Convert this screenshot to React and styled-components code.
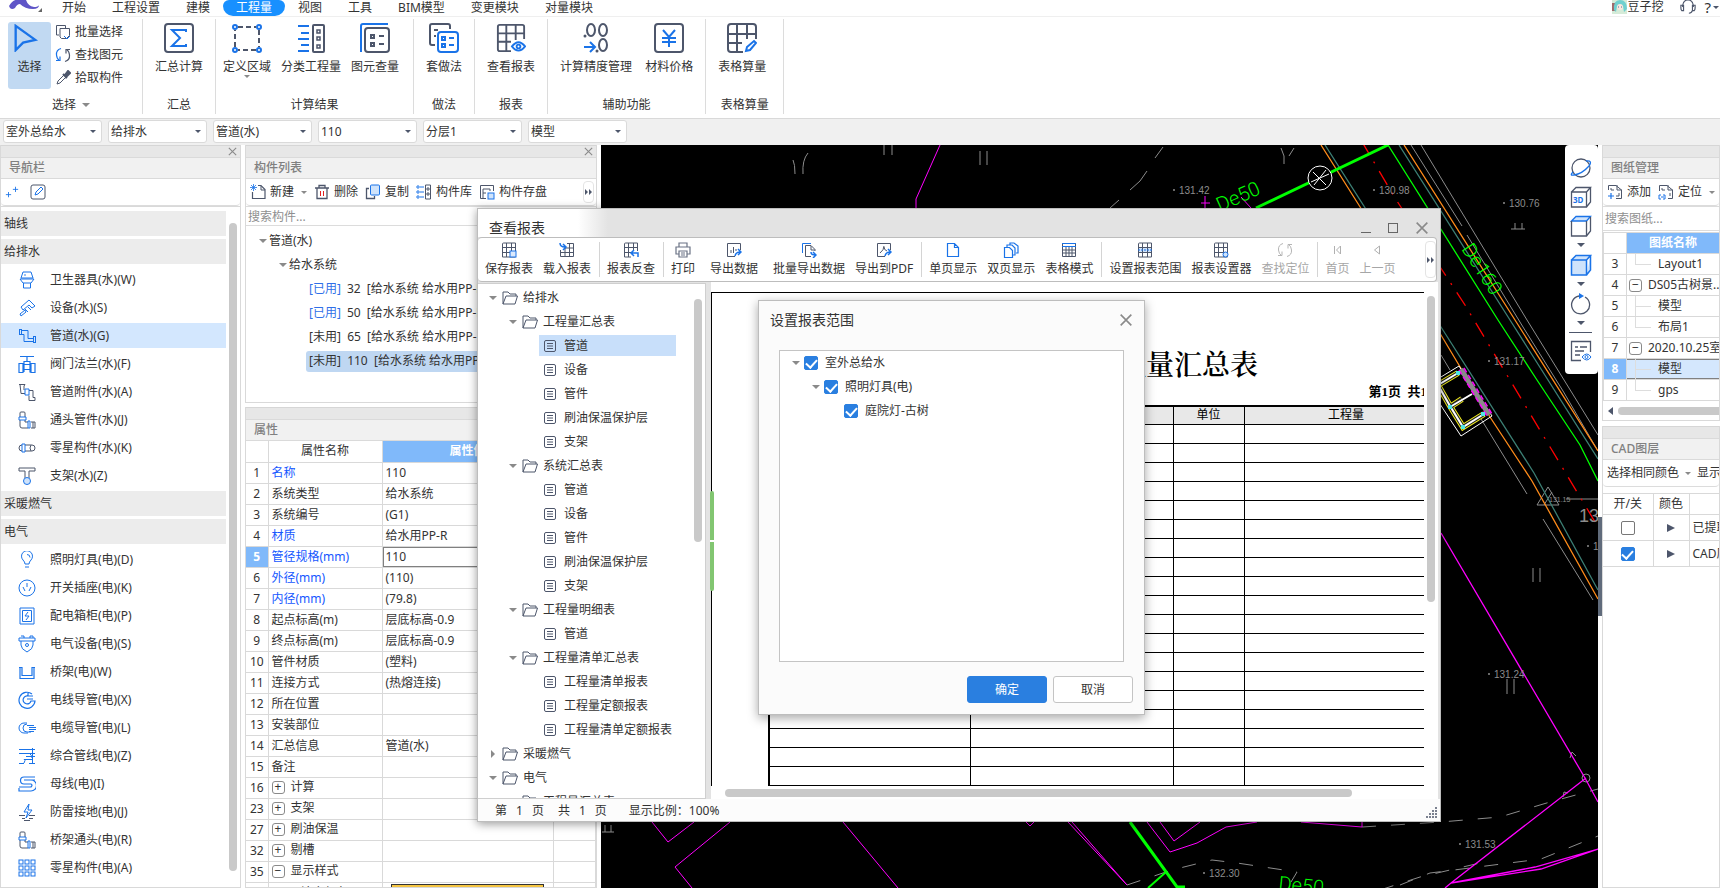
import React, { useState } from 'react'
import styled, { createGlobalStyle, css } from 'styled-components'

const INK = '#4d566b'
const BLUE = '#1a73e8'

const navGroups = [
  { title: '轴线', items: [] },
  {
    title: '给排水',
    items: [
      ['toilet', '卫生器具(水)(W)'],
      ['shower', '设备(水)(S)'],
      ['pipe', '管道(水)(G)'],
      ['valve', '阀门法兰(水)(F)'],
      ['pipePart', '管道附件(水)(A)'],
      ['elbow', '通头管件(水)(J)'],
      ['sleeve', '零星构件(水)(K)'],
      ['bracket', '支架(水)(Z)'],
    ],
  },
  { title: '采暖燃气', items: [] },
  {
    title: '电气',
    items: [
      ['bulb', '照明灯具(电)(D)'],
      ['socket', '开关插座(电)(K)'],
      ['cabinet', '配电箱柜(电)(P)'],
      ['plug', '电气设备(电)(S)'],
      ['tray', '桥架(电)(W)'],
      ['conduit', '电线导管(电)(X)'],
      ['cable', '电缆导管(电)(L)'],
      ['lines', '综合管线(电)(Z)'],
      ['busbar', '母线(电)(I)'],
      ['lightning', '防雷接地(电)(J)'],
      ['elbow', '桥架通头(电)(R)'],
      ['grid9', '零星构件(电)(A)'],
      ['box', ''],
    ],
  },
]

const properties = [
  ['1', '名称', '110', 'blue'],
  ['2', '系统类型', '给水系统'],
  ['3', '系统编号', '(G1)'],
  ['4', '材质', '给水用PP-R', 'blue'],
  ['5', '管径规格(mm)', '110', 'blue'],
  ['6', '外径(mm)', '(110)', 'blue'],
  ['7', '内径(mm)', '(79.8)', 'blue'],
  ['8', '起点标高(m)', '层底标高-0.9'],
  ['9', '终点标高(m)', '层底标高-0.9'],
  ['10', '管件材质', '(塑料)'],
  ['11', '连接方式', '(热熔连接)'],
  ['12', '所在位置', ''],
  ['13', '安装部位', ''],
  ['14', '汇总信息', '管道(水)'],
  ['15', '备注', ''],
  ['16', '计算', '', 'plus'],
  ['23', '支架', '', 'plus'],
  ['27', '刷油保温', '', 'plus'],
  ['32', '剔槽', '', 'plus'],
  ['35', '显示样式', '', 'minus'],
]

const reportTree = [
  [0, '给排水', 'open'],
  [1, '工程量汇总表', 'open'],
  [2, '管道'],
  [2, '设备'],
  [2, '管件'],
  [2, '刷油保温保护层'],
  [2, '支架'],
  [1, '系统汇总表', 'open'],
  [2, '管道'],
  [2, '设备'],
  [2, '管件'],
  [2, '刷油保温保护层'],
  [2, '支架'],
  [1, '工程量明细表', 'open'],
  [2, '管道'],
  [1, '工程量清单汇总表', 'open'],
  [2, '工程量清单报表'],
  [2, '工程量定额报表'],
  [2, '工程量清单定额报表'],
  [0, '采暖燃气', 'closed'],
  [0, '电气', 'open'],
  [1, '工程量汇总表', 'open'],
]

const reportTools = [
  [['tableSave', '保存报表'], ['tableLoad', '载入报表']],
  [['tableBack', '报表反查']],
  [['printer', '打印'], ['export', '导出数据', 'wide'], ['batchExport', '批量导出数据'], ['pdf', '导出到PDF']],
  [['page', '单页显示'], ['pages', '双页显示'], ['tableMode', '表格模式']],
  [['tableRange', '设置报表范围'], ['tableSet', '报表设置器'], ['locate', '查找定位', 'off']],
  [['first', '首页', 'off'], ['prev', '上一页', 'off']],
]

// [viewBox size, drawing]
const table15 = (
  <path d="M1.500 2a1 1 0 0 1 1-1H14.500v14H1.500zM1.500 5.500H14.500M1.500 10.500H14.500M5.500 1v14M10.500 1v14" />
)
const icons = {
  cursor: [30, <path d="M5 2v26l8-8 13-3z" stroke={BLUE} strokeWidth="2.500" />],
  batchSelect: [16, <>
    <path d="M4 11H1.500V1.500h9V4" stroke={INK} />
    <path d="M5 4.500h9.500v7l-3 3H6.500L5 13z" stroke={INK} />
    <path d="M9 12l3 3 3-3" stroke={BLUE} />
  </>],
  findLoop: [16, <>
    <path d="M6 1.500Q1 3 1.500 8 2 12 4 13" stroke={BLUE} strokeWidth="1.200" /><path d="M1 13.500h4v-4" stroke={BLUE} strokeWidth="1.200" />
    <path d="M10 14.500Q15 13 14.500 8 14 4 12 3M15 2.500h-4v4" stroke={INK} strokeWidth="1.200" />
  </>],
  picker: [16, <>
    <path d="M2 14l1-3 6-6 2 2-6 6z" stroke={INK} />
    <path d="M8 4l4 4M10 5l3-4 2 2-4 4z" stroke={INK} strokeWidth="2" fill={INK} />
  </>],
  sigma: [30, <>
    <rect x="1" y="1" width="28" height="28" rx="3" stroke={INK} strokeWidth="2" />
    <path d="M22 9V7H8l8 8-8 8h14v-2" stroke={BLUE} strokeWidth="2" />
  </>],
  region: [30, <>
    <path d="M6 4h18M27 7v17M24 27H6M3 24V7" stroke={INK} strokeWidth="2" strokeDasharray="5 3" />
    {[[3, 4], [27, 4], [3, 27], [27, 27]].map(([x, y]) => (
      <circle key={`${x}-${y}`} cx={x} cy={y} r="2" stroke={BLUE} strokeWidth="2" fill="#fff" />
    ))}
  </>],
  classify: [30, <>
    <path d="M2 3h11M5 10h8M2 16h11M5 22h8M2 28h11" stroke={BLUE} strokeWidth="2" />
    <rect x="17" y="2" width="11" height="27" rx="1" stroke={INK} strokeWidth="2" />
    <path d="M21 7h3v3h-3zM21 14h3v3h-3zM21 22h3v3h-3z" stroke={INK} strokeWidth="1.500" />
  </>],
  elementQty: [30, <>
    <path d="M1 29V3a2 2 0 0 1 2-2h25" stroke={BLUE} strokeWidth="2" />
    <rect x="5" y="5" width="24" height="24" rx="3" stroke={INK} strokeWidth="2" />
    <path d="M11 12h3v3h-3zM11 20h3v3h-3zM19 13h5M19 21h5" stroke={INK} strokeWidth="2" />
  </>],
  method: [30, <>
    <path d="M6 22H3a2 2 0 0 1-2-2V3a2 2 0 0 1 2-2h16a2 2 0 0 1 2 2v3M5 7h4M5 13h2" stroke={INK} strokeWidth="2" />
    <rect x="9" y="9" width="20" height="20" rx="3" stroke={BLUE} strokeWidth="2" />
    <path d="M13 14h3v3h-3zM13 21h3v3h-3zM20 15h5M20 22h5" stroke={BLUE} strokeWidth="2" />
  </>],
  viewReport: [32, <>
    <path d="M16 30H4a2 2 0 0 1-2-2V4a2 2 0 0 1 2-2h24a2 2 0 0 1 2 2v13M2 11h28M2 20h14M11 2v28M21 2v16" stroke={INK} strokeWidth="2" />
    <path d="M17 25q7-9 14 0q-7 9-14 0z" stroke={BLUE} strokeWidth="2" fill="#fff" />
    <circle cx="24" cy="25" r="2" stroke={BLUE} strokeWidth="2" />
  </>],
  precision: [30, <>
    <ellipse cx="10" cy="7" rx="4" ry="6" stroke={INK} strokeWidth="2" />
    <ellipse cx="22" cy="7" rx="4" ry="6" stroke={INK} strokeWidth="2" />
    <ellipse cx="22" cy="22" rx="4" ry="6" stroke={INK} strokeWidth="2" />
    <circle cx="4" cy="13" r="1.500" fill={INK} /><circle cx="16" cy="28" r="1.500" fill={INK} />
    <path d="M3 24h10M9 19l5 5-5 5" stroke={BLUE} strokeWidth="2" />
  </>],
  price: [30, <>
    <rect x="1" y="1" width="28" height="28" rx="3" stroke={INK} strokeWidth="2" />
    <path d="M9 7l6 7 6-7M8 15h14M8 19h14M15 14v10" stroke={BLUE} strokeWidth="2" />
  </>],
  tableEdit: [30, <>
    <path d="M16 29H4a3 3 0 0 1-3-3V4a3 3 0 0 1 3-3h22a3 3 0 0 1 3 3v12M1 11h28M1 20h14M10 1v28M20 1v15" stroke={INK} strokeWidth="2" />
    <path d="M19 28l1-4 7-6 2 2-6 7z" stroke={BLUE} strokeWidth="2" />
  </>],
  plusPlus: [16, <path d="M1 11h6M4 8v6M9 5h6M12 2v6" stroke={BLUE} />],
  edit: [16, <>
    <rect x="1" y="1" width="14" height="14" rx="2" stroke={INK} />
    <path d="M5 11l1-3 5-5 2 2-5 5z" stroke={BLUE} />
  </>],
  newFile: [16, <>
    <path d="M8 1.500h3l4 4v9H2.500V8" stroke={INK} strokeWidth="1.200" />
    <path d="M11 2v4h4" stroke={INK} />
    <path d="M1 1l5 5M6 1L1 6M3.500 0v7M0 3.500h7" stroke={BLUE} strokeWidth=".8" />
  </>],
  trash: [16, <>
    <path d="M1 4h14M3 4v10.500h10V4M5 4V1.500h6V4" stroke={INK} strokeWidth="1.300" />
    <path d="M6.500 7v5M9.500 7v5" stroke="#e02020" />
  </>],
  copy: [16, <>
    <path d="M4 4.500H1.500v10h8V12" stroke={INK} strokeWidth="1.300" />
    <rect x="5.500" y="1" width="9" height="10" rx="1" stroke={BLUE} fill="#cfe3fb" />
  </>],
  library: [16, <>
    <circle cx="2" cy="3" r="1.200" stroke={BLUE} /><circle cx="2" cy="8" r="1.200" stroke={BLUE} /><circle cx="2" cy="13" r="1.200" stroke={BLUE} />
    <path d="M4 3h4M4 8h4M4 13h4" stroke={BLUE} />
    <path d="M9.500 1h5v14h-5zM11 4h2v2h-2zM11 9h2v2h-2z" stroke={INK} />
  </>],
  store: [16, <>
    <path d="M7 14.500H1.500v-13h13V7M4 14V5h7v2M4 9h3" stroke={INK} />
    <rect x="9" y="9" width="6" height="6" stroke={BLUE} fill="#cfe3fb" />
  </>],
  toilet: [18, <>
    <path d="M5 1h8l2 6H3zM2 8h14l-3 4H5zM5.500 12v5h7v-5" stroke={BLUE} /><circle cx="7" cy="4" r=".8" fill={BLUE} />
  </>],
  shower: [18, <path d="M3 8l8-7 6 6-3 2-3-3-6 5zM7 10l3 3M10 8l3 3M7 11l-5 4 1 2 5-4z" stroke={BLUE} />],
  pipe: [18, <path d="M1.500 2v6M3.500 2v5M3 3.500h7v8h5M3 7.500h3v7h9M15.500 9v7M17.500 9v7M1 2.500h2M1 7.500h2M15 9.500h2M15 15.500h2" stroke={BLUE} />],
  valve: [18, <path d="M2 1.500h14M9 1v5M6 6.500h6v11M6 6v11M5 9.500h8M5 14.500h8M1 8.500h4v9H1zM13 8.500h4v9h-4z" stroke={BLUE} strokeWidth="1.200" />],
  pipePart: [18, <>
    <path d="M1 1.500h6L6 3v4M2 1.500l1 9h4M11 7.500h4v7h2v3h-6v-5" stroke={INK} /><path d="M7 6h4v6H7z" stroke={BLUE} />
  </>],
  elbow: [18, <>
    <path d="M2 6V2q0-1 1-1h3q1 0 1 1v4M2 9v6q0 2 2 2h6M7 9v2h3M13 11h4v6h-4M15 11v6" stroke={INK} />
    <path d="M1 6h7v3H1zM10 10h2v7h-2z" stroke={BLUE} />
  </>],
  sleeve: [18, <>
    <rect x="1" y="6" width="16" height="6" rx="3" stroke={INK} /><path d="M4 5h3v8H4z" stroke={BLUE} fill="#fff" /><path d="M13 6q-2 3 0 6" stroke={INK} />
  </>],
  bracket: [18, <>
    <path d="M1 1h16v3h-6v7M1 1v3h6v7" stroke={INK} /><circle cx="9" cy="14" r="3.500" stroke={BLUE} fill="#cfe3fb" />
  </>],
  bulb: [18, <path d="M7 13q0-2-2-4a5.500 5.500 0 1 1 8 0q-2 2-2 4zM7 16h4M9 3.500q3 0 3 3" stroke={BLUE} />],
  socket: [18, <><circle cx="9" cy="9" r="8" stroke={BLUE} /><path d="M9 4v4M5 8l2 4M13 8l-2 4" stroke={BLUE} /></>],
  cabinet: [18, <path d="M2 1h14v16H2zM4.500 3.500h9v11h-9zM10 5l-3 4h4l-3 4" stroke={BLUE} />],
  plug: [18, <><path d="M1 3h16v3H1zM3 1h3v2M12 3V1h3v2M3 6v4q0 4 6 7q6-3 6-7V6" stroke={BLUE} /><circle cx="9" cy="10" r="1.500" stroke={BLUE} /></>],
  tray: [18, <path d="M1 4.500h3v8h10v-8h3M2 4v11.500h14V4" stroke={BLUE} strokeWidth="1.200" />],
  conduit: [18, <path d="M14 3A8 8 0 1 0 17 10h-4a4 4 0 1 1-3-5h5M10 2v3M9 8h6" stroke={BLUE} strokeWidth="1.200" />],
  cable: [18, <path d="M9 4H6a5 5 0 0 0 0 10h4M9 5a4 4 0 0 0 0 8h4M9 6.500h7M11 8.500h7M11 10.500h7M11 12.500h5" stroke={BLUE} />],
  lines: [18, <path d="M1 2.500h16M1 6.500h16M8 9.500h9M1 16.500h5M6 12.500h8M14.500 1v15M6 16q2-3 0-4M11 6q3 2 3 5M11 16.500h6" stroke={BLUE} />],
  busbar: [18, <path d="M17 2H6a3 3 0 0 0 0 7h7q2 1 0 3H1M17 5H6h7a4 4 0 0 1 0 11H1v-3" stroke={BLUE} strokeWidth="1.200" />],
  lightning: [18, <><path d="M11 1L6 9h4l-2 6 6-8h-4z" stroke={BLUE} /><path d="M1 12.500h6M11 12.500h6M4 15.500h3M11 15.500h4M6 17.500h6" stroke={INK} /></>],
  grid9: [18, <>{[1, 7, 13].map((y) => [1, 7, 13].map((x) => <rect key={`${x}${y}`} x={x} y={y} width="4" height="4" stroke={BLUE} />))}</>],
  box: [18, <rect x="1" y="1" width="16" height="15" stroke={INK} />],
  folder: [16, <path d="M1 14V2h5l2 2h6v2M1 14L4 6h11.500L13 14z" stroke={INK} />],
  doc: [14, <><rect x="1.500" y="1.500" width="11" height="11" rx="1.500" stroke={INK} /><path d="M4 4.500h6M4 7h6M4 9.500h6" stroke={INK} /></>],
  tableSave: [16, <><g stroke={INK}>{table15}</g><rect x="9" y="9" width="6" height="6" fill="#dbe9fc" stroke={BLUE} /></>],
  tableLoad: [16, <><path d="M8 1.500h6.500v13h-13V8M1.500 10.500h13M6 6h8.500M6 6v8M10.500 1v13" stroke={INK} /><path d="M1 1q0 4 5 4M4 2l3 3-3 3" stroke={BLUE} strokeWidth="1.500" /></>],
  tableBack: [16, <><g stroke={INK}>{table15}</g><path d="M8 9h8v7H8z" fill="#fff" /><path d="M15 15v-4H9M11 8l-3 3 3 3" stroke={BLUE} strokeWidth="1.500" /></>],
  printer: [16, <path d="M4 5V1h8v4M4 12H1V5h14v7h-3M4 9h8v6H4zM6 11h4M6 13h4" stroke="#6b7385" strokeWidth="1.200" />],
  export: [16, <><path d="M9 14.500H1.500v-13h13V8M5 8v3M7.500 5v6M10 7v2" stroke={INK} /><path d="M9 14q1-4 5-4M12 7l3 3-3 3" stroke={BLUE} strokeWidth="1.500" /></>],
  batchExport: [16, <><path d="M1.500 11V1.500H10" stroke={BLUE} /><path d="M10 14.500H4.500v-11H10l4 4V9M10 4v4h4" stroke={INK} /><path d="M10 10q0 3 4 3M12 10l3 3-3 3" stroke={BLUE} strokeWidth="1.500" /></>],
  pdf: [16, <><path d="M9 14.500H1.500v-13h13V8M8 4q0 4-4 7M8 5q0 3 3 4" stroke={INK} /><path d="M9 14q1-4 5-4M12 7l3 3-3 3" stroke={BLUE} strokeWidth="1.500" /></>],
  page: [16, <path d="M2.500 1.500h7l4 4v9h-11zM9.500 1.500v4h4" stroke={BLUE} strokeWidth="1.200" />],
  pages: [16, <path d="M1.500 5.500h5l3 3v7h-8zM4 5V3h5l3 3v7h-2M7 3V1h4l4 3v7h-2" stroke={BLUE} strokeWidth="1.200" />],
  tableMode: [16, <><path d="M1.500 1.500v13h13v-13M1.500 8h13M1.500 11h13M5 5v9M8 5v9M11 5v9" stroke={INK} /><path d="M1 4.500h14M1 1.500h14" stroke={BLUE} /></>],
  tableRange: [16, <><path d="M1 5h14v6H1z" fill="#cfe3fb" /><g stroke={INK}>{table15}</g><path d="M1 8h14" stroke={BLUE} strokeDasharray="2 1" /></>],
  tableSet: [16, <><g stroke={INK}>{table15}</g><circle cx="12.500" cy="12.500" r="2.500" fill="#cfe3fb" stroke={BLUE} /></>],
  locate: [16, <path d="M6 1.500Q1 3 1.500 8 2 12 4 13M1 13.500h4v-4M10 14.500Q15 13 14.500 8 14 4 12 3M15 2.500h-4v4" stroke="#b5b5b5" />],
  first: [16, <path d="M5.500 4v8M11.500 4v8L7.500 8z" stroke="#b0b0b0" />],
  prev: [16, <path d="M10.500 4v8L5.500 8z" stroke="#b0b0b0" />],
  orbit: [22, <><circle cx="11" cy="11" r="9" stroke={INK} strokeWidth="1.300" /><path d="M3 15q-4 4 1 3q8-1 15-9q4-6-3-5" stroke={BLUE} strokeWidth="1.300" /></>],
  cube3d: [22, <>
    <path d="M1.500 6h15v15h-15zM1.500 6L6 1.500h14.500L16.500 6M20.500 1.500V16l-4 5" stroke={INK} strokeWidth="1.300" />
    <text x="3" y="17" fontSize="8" fontWeight="700" fill={BLUE} fontFamily="Noto Sans, sans-serif">3D</text>
  </>],
  cubeTop: [22, <>
    <path d="M1.500 6L6 1.500h14.500L16.500 6z" stroke={BLUE} fill="#cfe3fb" strokeWidth="1.300" />
    <path d="M1.500 6v15h15V6M20.500 2v14l-4 5" stroke={INK} strokeWidth="1.300" />
  </>],
  cubeBlue: [22, <path d="M1.500 6h15v15h-15zM1.500 6L6 1.500h14.500L16.500 6M20.500 1.500V16l-4 5" fill="#cfe3fb" stroke={BLUE} strokeWidth="1.500" />],
  rotate: [22, <><path d="M9 3A9 9 0 1 0 15 4" stroke={INK} strokeWidth="1.300" /><path d="M9 0v6l5-3z" fill={BLUE} /></>],
  listEye: [22, <>
    <path d="M11 20.500H1.500v-19h19V12M5 7h3M10 7h7M5 11h9M5 15h5" stroke={INK} strokeWidth="1.300" />
    <path d="M12 17q5-6 9 0q-4 6-9 0z" stroke={BLUE} fill="#fff" /><circle cx="16.500" cy="17" r="1.500" stroke={BLUE} />
  </>],
  sheetAdd: [16, <><path d="M1.500 6V1.500H9L14.500 6v8.500H9M10 1v5h5M4 4v2h3M12 9v3H9" stroke={INK} /><path d="M1 12h6M4 9v6" stroke={BLUE} strokeWidth="1.200" /></>],
  sheetFind: [16, <><path d="M1.500 7V1.500H9L14.500 6v8.500H10M10 1v5h5M4 4v2h3M12 9v3" stroke={INK} /><path d="M3 11H1v4h2M5 11h2v4H5M3 13h3" stroke={BLUE} /></>],
  headset: [18, <path d="M3 9V7q1-6 6-6t6 6v2M1 7h3v6H2q-1-1-1-3zM17 7h-3v6h2q1-1 1-3zM14 13q-1 3-4 3" stroke={INK} strokeWidth="1.300" />],
  close: [12, <path d="M2 2l8 8M10 2l-8 8" stroke="#8a8a8a" strokeWidth="1.200" />],
  more: [10, <path d="M1 2l3 3-3 3zM5 2l3 3-3 3z" fill={INK} />],
  grip: [12, <path d="M0 9h2v2H0zM3 6h2v2H3zM3 9h2v2H3zM6 3h2v2H6zM6 6h2v2H6zM6 9h2v2H6zM9 0h2v2H9zM9 3h2v2H9zM9 6h2v2H9zM9 9h2v2H9z" fill="#7b8190" />],
}

function Icon({ name, size }) {
  const [box, drawing] = icons[name]
  return (
    <StIcon width={size || box} height={size || box} viewBox={`0 0 ${box} ${box}`} fill="none" aria-hidden="true">
      {drawing}
    </StIcon>
  )
}

function MenuBar() {
  const tabs = ['开始', '工程设置', '建模', '工程量', '视图', '工具', 'BIM模型', '变更模块', '对量模块']
  return (
    <StMenuBar>
      <StLogo viewBox="0 0 46 16" aria-hidden="true">
        <path d="M9 6Q14-2 20 0h6q2 6 8 7q4 0 5-2q0 4-6 4q-8 0-13-5q-3 0-5 4q-3 2-5 0z" fill="#5f55c8" />
        <path d="M42 12v-4l-4 4z" fill="#666" />
      </StLogo>
      {tabs.map((tab) => (
        <StMenuTab key={tab} $active={tab === '工程量'}>{tab}</StMenuTab>
      ))}
      <StUser>
        <svg width="15" height="14" viewBox="0 0 15 14" aria-hidden="true">
          <rect width="15" height="14" fill="#d5ebd8" />
          <path d="M0 3h3v8H0z" fill="#a06a6a" />
          <path d="M2 10Q1 0 8 0t7 9l-3 3-1-6H5l-1 6z" fill="#6fd0cf" />
          <circle cx="8" cy="7" r="3" fill="#fbe6dc" />
          <path d="M6 7h1M9 7h1" stroke="#3d7ca0" />
        </svg>
        <span>豆子挖</span>
        <StIconButton aria-label="客服"><Icon name="headset" size={16} /></StIconButton>
        <StIconButton aria-label="帮助">?<StCaret /></StIconButton>
      </StUser>
    </StMenuBar>
  )
}

function RibbonTool({ icon, label, caret }) {
  return (
    <StRibbonTool>
      <Icon name={icon} size={30} />
      <span>{label}</span>
      {caret && <StCaret $soft />}
    </StRibbonTool>
  )
}

function Ribbon() {
  return (
    <StRibbon>
      <StRibbonGroup>
        <StSelectTools>
          <StPickButton>
            <Icon name="cursor" size={28} />
            <span>选择</span>
          </StPickButton>
          <StToolList>
            <StListTool><Icon name="batchSelect" />批量选择</StListTool>
            <StListTool><Icon name="findLoop" />查找图元</StListTool>
            <StListTool><Icon name="picker" />拾取构件</StListTool>
          </StToolList>
        </StSelectTools>
        <StGroupLabel>选择<StCaret $big $soft /></StGroupLabel>
      </StRibbonGroup>
      <StRibbonGroup>
        <StTools><RibbonTool icon="sigma" label="汇总计算" /></StTools>
        <StGroupLabel>汇总</StGroupLabel>
      </StRibbonGroup>
      <StRibbonGroup>
        <StTools $tight>
          <RibbonTool icon="region" label="定义区域" caret />
          <RibbonTool icon="classify" label="分类工程量" />
          <RibbonTool icon="elementQty" label="图元查量" />
        </StTools>
        <StGroupLabel>计算结果</StGroupLabel>
      </StRibbonGroup>
      <StRibbonGroup>
        <StTools><RibbonTool icon="method" label="套做法" /></StTools>
        <StGroupLabel>做法</StGroupLabel>
      </StRibbonGroup>
      <StRibbonGroup>
        <StTools><RibbonTool icon="viewReport" label="查看报表" /></StTools>
        <StGroupLabel>报表</StGroupLabel>
      </StRibbonGroup>
      <StRibbonGroup>
        <StTools>
          <RibbonTool icon="precision" label="计算精度管理" />
          <RibbonTool icon="price" label="材料价格" />
        </StTools>
        <StGroupLabel>辅助功能</StGroupLabel>
      </StRibbonGroup>
      <StRibbonGroup>
        <StTools $roomy><RibbonTool icon="tableEdit" label="表格算量" /></StTools>
        <StGroupLabel>表格算量</StGroupLabel>
      </StRibbonGroup>
    </StRibbon>
  )
}

function FilterBar() {
  const filters = [
    ['专业工程', '室外总给水'], ['专业', '给排水'], ['构件类型', '管道(水)'],
    ['构件', '110'], ['分层', '分层1'], ['视图', '模型'],
  ]
  return (
    <StFilterBar>
      {filters.map(([label, value]) => (
        <StSelectBox key={label}>
          <select aria-label={label} defaultValue={value}><option>{value}</option></select>
          <StCaret />
        </StSelectBox>
      ))}
    </StFilterBar>
  )
}

function PanelTop({ title, closable }) {
  return (
    <>
      <StStrip>
        {closable && <StIconButton aria-label={`关闭${title}`}><Icon name="close" size={11} /></StIconButton>}
      </StStrip>
      <StPanelTitle>{title}</StPanelTitle>
    </>
  )
}

function NavPanel() {
  const [current, setCurrent] = useState('管道(水)(G)')
  return (
    <StNavPanel>
      <PanelTop title="导航栏" closable />
      <StToolbar $gap="11px">
        <StIconButton aria-label="展开"><Icon name="plusPlus" size={14} /></StIconButton>
        <StIconButton aria-label="编辑"><Icon name="edit" /></StIconButton>
      </StToolbar>
      <StNavBody>
        <StNavList>
          {navGroups.map((group) => (
            <React.Fragment key={group.title}>
              <StNavHeading>{group.title}</StNavHeading>
              {group.items.map(([icon, label]) => (
                <StNavItem key={label} $active={label === current} onClick={() => setCurrent(label)}>
                  <Icon name={icon} />{label}
                </StNavItem>
              ))}
            </React.Fragment>
          ))}
        </StNavList>
        <StNavThumb />
      </StNavBody>
    </StNavPanel>
  )
}

function ComponentPanel() {
  return (
    <StMidColumn>
      <StPanel>
        <PanelTop title="构件列表" closable />
        <StToolbar>
          <StTextTool><Icon name="newFile" />新建</StTextTool>
          <StCaret $soft />
          <StTextTool><Icon name="trash" />删除</StTextTool>
          <StTextTool><Icon name="copy" />复制</StTextTool>
          <StTextTool><Icon name="library" />构件库</StTextTool>
          <StTextTool><Icon name="store" />构件存盘</StTextTool>
          <StMore aria-label="更多"><Icon name="more" /></StMore>
        </StToolbar>
        <StSearch aria-label="搜索构件" placeholder="搜索构件..." />
        <StCompTree>
          <StCompRow $indent={13}><StCaret $big $soft />管道(水)</StCompRow>
          <StCompRow $indent={33}><StCaret $big $soft />给水系统</StCompRow>
          <StCompRow $indent={63}><StUsed>[已用]</StUsed>32  [给水系统 给水用PP-R 32]</StCompRow>
          <StCompRow $indent={63}><StUsed>[已用]</StUsed>50  [给水系统 给水用PP-R 50]</StCompRow>
          <StCompRow $indent={63}>[未用]  65  [给水系统 给水用PP-R 65]</StCompRow>
          <StCompRow $indent={63} $active><span>[未用]  110  [给水系统 给水用PP-R 110]</span></StCompRow>
        </StCompTree>
      </StPanel>
      <StPropPanel>
        <PanelTop title="属性" />
        <StPropTable>
          <colgroup><col width="22" /><col width="114" /><col width="171" /><col /></colgroup>
          <thead>
            <tr><th /><th>属性名称</th><StBlueHead>属性值</StBlueHead><th>附加</th></tr>
          </thead>
          <tbody>
            {properties.map(([no, name, value, kind]) => (
              <StPropRow key={no} $active={no === '5'} $blue={kind === 'blue'}>
                <th scope="row">{no}</th>
                <td>
                  {(kind === 'plus' || kind === 'minus') && (
                    <StExpand aria-label={`展开${name}`}>{kind === 'plus' ? '+' : '−'}</StExpand>
                  )}
                  {name}
                </td>
                <td>{value}</td>
                <td />
              </StPropRow>
            ))}
            <StPropRow>
              <th scope="row" />
              <StChildCell>填充颜色</StChildCell>
              <td><StSwatch /></td>
              <td />
            </StPropRow>
          </tbody>
        </StPropTable>
      </StPropPanel>
    </StMidColumn>
  )
}

function Elevation({ x, y, children }) {
  return (
    <g fill="#8c8c8c">
      <circle cx={x} cy={y} r="1" />
      <text x={x + 5} y={y + 4} fontSize="10">{children}</text>
    </g>
  )
}

// Site plan, drawn in window coordinates and shifted under the canvas corner.
function SitePlan() {
  return (
    <StPlan aria-label="模型">
      <g transform="translate(-601 -145)" fill="none" fontFamily="'Liberation Sans', sans-serif">
        <g stroke="#8c8c8c">
          <path d="M793 160q2 4 2 14M808 153q-6 7-5 21M884 145v10M892 145v10M980 151v14M987 151v14M1281 148l3 8v8M1294 148l-5 8" />
          <path d="M1163 147l-8 11M1147 171l-7 10-10 9M1119 200l-9 8" />
          <path d="M1511 229h14M1515 223v6M1522 223v6M602 832h12M605 825v7M611 825v7" />
          <path d="M1421 145L1527 320 1598 435M1411 145l51 81M1467 235l56 92 40 64 35 60" />
          <path d="M1441 355l9 15M1478 414l49 80M1543 519l50 81M1533 568v14M1540 568v14M1507 679v15M1514 679v15" />
          <path d="M1548 487l-11 18h22zM1552 492l-8 13M1566 499h32" />
          <path d="M1362 827L1441 822 1500 817 1550 802 1598 789M1400 885l30-12 40-5 71-9 57-23M1127 885l45-15 40-10 25 3 60 9-6 10M1380 890l40-13 60-14" strokeDasharray="14 15" />
          <circle cx="1586" cy="778" r="4" /><path d="M1570 758l2-6 4 4M1563 797l1-5 4 1" />
        </g>
        <g stroke="#ff8c1a">
          <path d="M1404 145l111 175 83 131M1321 145l41 65 79 125 49 82 42 64 66 118" strokeWidth="1.300" />
        </g>
        <g stroke="#3c7f74">
          <path d="M1399 145l111 175 88 139M1325 145l116 182 93 146 64 117" strokeWidth="1.300" />
        </g>
        <path d="M1361 140l34 58 70 107 133 222" stroke="#f00" strokeDasharray="16 9 2 9" strokeWidth="1.300" />
        <g stroke="#0f0">
          <path d="M1388 145l110 175 39 60 43 65 18 36" strokeWidth="1.300" />
          <path d="M1388 145l-132 63M1130 822l47 65h8" strokeWidth="3" />
          <path d="M1148 888l18-16" strokeWidth="2" />
        </g>
        <g stroke="#f0f">
          <path d="M940 145l-24 54v9M1205 196v12M1201 203h9M1241 197l10 11" />
          <path d="M652 822l16 20 26-20M730 822l-55 45 17 21M843 822l55 66M1026 822l4 4 4-4M1068 822l59 63M1072 822l55 63" />
          <path d="M1147 822l23 30 27-9 29-16 31-5M1160 822l14 19 26-19M1301 822l61 5v-5" />
          <path d="M1441 533l144 245 13 24M1586 778L1451 883l-6 5M1451 883l84-16 63-18M1451 883l90-14 57-20" strokeWidth="1.300" />
        </g>
        <g>
          <path d="M1436 380l23-14 33 50-31 20-25-38" stroke="#fff" />
          <path d="M1461 369l28 46" stroke="#8a8a8a" strokeWidth="5" />
          <path d="M1459 370l28 46M1464 368l28 46" stroke="#f0f" strokeWidth="1.500" strokeDasharray="5 3" />
          <path d="M1458 373l-20 12 12 21 13 21 21-13M1450 407l12-8" stroke="#f3ee1c" strokeWidth="6" />
          <path d="M1458 373l-20 12 12 21 13 21 21-13M1450 407l12-8" stroke="#222" strokeWidth="4" />
          <path d="M1458 373l-20 12 12 21 13 21 21-13M1450 407l22-13" stroke="#fff" strokeWidth="2" />
          <path d="M1456 371h4v4h-4zM1448 405h4v4h-4zM1461 425h4v4h-4zM1481 412h4v4h-4z" fill="#4fe6e6" />
        </g>
        <g stroke="#fff">
          <circle cx="1320" cy="178" r="12" fill="#000" />
          <path d="M1311 182l18-8M1313 172l13 13M1326 170l-12 15" />
        </g>
        <g fill="#0f0" fontSize="20" fontFamily="Roboto, sans-serif" fontWeight="300">
          <text x="1220" y="212" transform="rotate(-24 1220 212)">De50</text>
          <text x="1461" y="249" transform="rotate(57 1461 249)">De160</text>
          <text x="1278" y="890" transform="rotate(6 1278 890)">De50</text>
        </g>
        <Elevation x={1174} y={190}>131.42</Elevation>
        <Elevation x={1374} y={190}>130.98</Elevation>
        <Elevation x={1504} y={203}>130.76</Elevation>
        <Elevation x={1489} y={361}>131.17</Elevation>
        <Elevation x={1489} y={674}>131.24</Elevation>
        <Elevation x={1460} y={844}>131.53</Elevation>
        <Elevation x={1204} y={873}>132.30</Elevation>
        <Elevation x={1588} y={546}>131.2</Elevation>
        <text x="1549" y="502" fontSize="7" fill="#8c8c8c">131.15</text>
        <text x="1579" y="522" fontSize="18" fill="#8c8c8c">13</text>
      </g>
    </StPlan>
  )
}

function Workspace() {
  return (
    <StWorkspace>
      <SitePlan />
      <StViewBar>
        <StIconButton aria-label="动态观察"><Icon name="orbit" /></StIconButton>
        <StIconButton aria-label="三维"><Icon name="cube3d" /></StIconButton>
        <StIconButton aria-label="俯视"><Icon name="cubeTop" /><StCaret $big /></StIconButton>
        <StIconButton aria-label="实体"><Icon name="cubeBlue" /><StCaret $big /></StIconButton>
        <StIconButton aria-label="旋转"><Icon name="rotate" /><StCaret $big /></StIconButton>
        <StRule />
        <StIconButton aria-label="显示设置"><Icon name="listEye" /></StIconButton>
      </StViewBar>
      <StCollapse aria-label="收起面板" />
    </StWorkspace>
  )
}

function RightPanels() {
  const sheets = [
    ['3', 'Layout1', 'last'], ['4', 'DS05古树景...'], ['5', '模型', 'mid'], ['6', '布局1', 'last'],
    ['7', '2020.10.25室'], ['8', '模型', 'mid'], ['9', 'gps', 'last'],
  ]
  return (
    <StRightColumn>
      <StPanel>
        <PanelTop title="图纸管理" />
        <StToolbar>
          <StTextTool><Icon name="sheetAdd" />添加</StTextTool>
          <StTextTool><Icon name="sheetFind" />定位</StTextTool>
          <StCaret $soft />
        </StToolbar>
        <StSearch $tall aria-label="搜索图纸" placeholder="搜索图纸..." />
        <StSheetTable>
          <colgroup><col width="23" /><col /></colgroup>
          <thead><tr><th /><StBlueHead>图纸名称</StBlueHead></tr></thead>
          <tbody>
            {sheets.map(([no, name, branch]) => (
              <StSheetRow key={no} $active={no === '8'}>
                <th scope="row">{no}</th>
                <td>
                  <StSheetName>
                    {branch ? <StBranch $last={branch === 'last'} /> : <StExpand aria-label={`收起${name}`}>−</StExpand>}
                    <span>{name}</span>
                  </StSheetName>
                </td>
              </StSheetRow>
            ))}
          </tbody>
        </StSheetTable>
        <StHScroll />
      </StPanel>
      <StCadPanel>
        <PanelTop title="CAD图层" />
        <StToolbar $gap="6px">
          <StPlainTool>选择相同颜色</StPlainTool>
          <StCaret $soft />
          <StPlainTool>显示</StPlainTool>
        </StToolbar>
        <StLayerTable>
          <colgroup><col width="50" /><col width="36" /><col /></colgroup>
          <thead><tr><th>开/关</th><th>颜色</th><th /></tr></thead>
          <tbody>
            <tr>
              <td><StCheck type="checkbox" aria-label="已提取" /></td>
              <td><StPlay /></td><td>已提取</td>
            </tr>
            <tr>
              <td><StCheck type="checkbox" aria-label="CAD原始图层" defaultChecked /></td>
              <td><StPlay /></td><td>CAD原</td>
            </tr>
          </tbody>
        </StLayerTable>
      </StCadPanel>
    </StRightColumn>
  )
}

function RangeDialog() {
  const rows = ['室外总给水', '照明灯具(电)', '庭院灯-古树']
  return (
    <StDialog role="dialog" aria-label="设置报表范围">
      <StDialogHead>
        <span>设置报表范围</span>
        <StIconButton aria-label="关闭"><Icon name="close" size={16} /></StIconButton>
      </StDialogHead>
      <StRangeBox>
        {rows.map((row, i) => (
          <StRangeRow key={row} $level={i}>
            {i < 2 ? <StCaret $big $soft /> : <StCaretSpace />}
            <StCheck type="checkbox" defaultChecked />
            {row}
          </StRangeRow>
        ))}
      </StRangeBox>
      <StDialogFoot>
        <StDialogButton $primary>确定</StDialogButton>
        <StDialogButton>取消</StDialogButton>
      </StDialogFoot>
    </StDialog>
  )
}

function ReportWindow() {
  const [current, setCurrent] = useState(2)
  return (
    <StWindow>
      <StWindowHead>
        <span>查看报表</span>
        <StWindowButtons>
          <StIconButton aria-label="最小化"><svg width="12" height="12" aria-hidden="true"><path d="M1 10.500h10" stroke="#666" /></svg></StIconButton>
          <StIconButton aria-label="最大化"><svg width="12" height="12" aria-hidden="true"><rect x="1.500" y="1.500" width="9" height="9" fill="none" stroke="#666" /></svg></StIconButton>
          <StIconButton aria-label="关闭"><Icon name="close" size={16} /></StIconButton>
        </StWindowButtons>
      </StWindowHead>
      <StReportBar>
        {reportTools.map((group) => (
          <StReportGroup key={group[0][1]}>
            {group.map(([icon, label, kind]) => (
              <StReportTool key={label} $wide={kind === 'wide'} disabled={kind === 'off'}>
                <Icon name={icon} />{label}
              </StReportTool>
            ))}
          </StReportGroup>
        ))}
        <StMore $tall aria-label="更多"><Icon name="more" /></StMore>
      </StReportBar>
      <StReportBody>
        <StReportTree>
          <div>
            {reportTree.map(([level, label, state], i) => (
              <StReportRow key={i} $level={level} $active={i === current} onClick={() => setCurrent(i)}>
                {state && <StCaret $big $soft $right={state === 'closed'} />}
                <Icon name={state ? 'folder' : 'doc'} />
                {label}
              </StReportRow>
            ))}
          </div>
          <StTreeThumb />
        </StReportTree>
        <StSplitter><StSplitButton aria-label="收起目录" /></StSplitter>
        <StPageArea>
          <StPageRow>
            <StPage>
              <StSheet>
                <StReportTitle>给排水管道工程量汇总表</StReportTitle>
                <StPageNo>第1页&nbsp;&nbsp;共1页</StPageNo>
                <StReportTable>
                  <colgroup><col width="201" /><col width="203" /><col width="71" /><col width="204" /></colgroup>
                  <thead><tr><th /><th /><th>单位</th><th>工程量</th></tr></thead>
                  <tbody>
                    {Array.from({ length: 19 }, (_, i) => (
                      <tr key={i}><td /><td /><td /><td /></tr>
                    ))}
                  </tbody>
                </StReportTable>
              </StSheet>
            </StPage>
            <StPageThumb />
          </StPageRow>
          <StPageHThumb />
        </StPageArea>
      </StReportBody>
      <StStatus>
        <StStatusItem><span>第</span><span>1</span><span>页</span></StStatusItem>
        <StStatusItem><span>共</span><span>1</span><span>页</span></StStatusItem>
        <span>显示比例：100%</span>
        <StGrip><Icon name="grip" /></StGrip>
      </StStatus>
      <RangeDialog />
    </StWindow>
  )
}

function App() {
  return (
    <>
      <GlobalStyle />
      <StApp>
        <MenuBar />
        <Ribbon />
        <FilterBar />
        <StMain>
          <NavPanel />
          <ComponentPanel />
          <Workspace />
          <RightPanels />
        </StMain>
        <ReportWindow />
      </StApp>
    </>
  )
}

export default App

const GlobalStyle = createGlobalStyle`
  * { box-sizing: border-box; }
  body {
    margin: 0;
    overflow: hidden;
    background: #fff;
    color: #333;
    font: 12px/16px "Noto Sans", "Noto Sans CJK SC", sans-serif;
  }
  button, input, select { font: inherit; color: inherit; }
  button { border: 0; padding: 0; background: none; cursor: pointer; white-space: nowrap; }
  table { border-collapse: collapse; table-layout: fixed; width: 100%; }
  th { font-weight: 400; }
`

const StApp = styled.div`
  position: relative;
  display: flex;
  flex-direction: column;
  height: 100vh;
  overflow: hidden;
`

const StIcon = styled.svg`
  display: block;
  flex: none;
`

const StCaret = styled.i`
  flex: none;
  width: 0;
  height: 0;
  border: ${({ $big }) => ($big ? '4px' : '3px')} solid transparent;
  border-top-color: ${({ $soft }) => ($soft ? '#8a8a8a' : '#4d566b')};
  border-bottom: 0;
  ${({ $right }) => $right && css`transform: rotate(-90deg);`}
`

const StIconButton = styled.button`
  display: flex;
  flex-wrap: wrap;
  align-items: center;
  justify-content: center;
  gap: 6px 2px;
`

const StMenuBar = styled.header`
  display: flex;
  align-items: flex-start;
  border-bottom: 1px solid #efefef;
`

const StLogo = styled.svg`
  width: 46px;
  height: 16px;
  margin-right: 3px;
`

const StMenuTab = styled.button`
  flex: none;
  height: 16px;
  padding: 0 13px;
  border-radius: 6px 6px 10px 10px;
  ${({ $active }) => $active && css`
    background: #1890ff;
    color: #fff;
  `}
`

const StUser = styled.div`
  display: flex;
  align-items: center;
  margin-left: auto;
  padding: 0 1px 2px 0;
  height: 16px;
  ${StIconButton}:first-of-type { margin: 0 8px 0 17px; }
  ${StIconButton}:last-of-type { font-size: 15px; flex-wrap: nowrap; }
`

const StRibbon = styled.section`
  display: flex;
  padding: 2px 0 4px;
  border-bottom: 1px solid #d9d9d9;
`

const StRibbonGroup = styled.div`
  display: flex;
  flex-direction: column;
  justify-content: space-between;
  height: 95px;
  padding-bottom: 1px;
  border-right: 1px solid #dcdcdc;
`

const StTools = styled.div`
  display: flex;
  gap: ${({ $tight }) => ($tight ? '10px' : '13px')};
  padding: ${({ $tight, $roomy }) => ($tight ? '4px 14px 0 7px' : $roomy ? '4px 17px 0 12px' : '4px 12px 0')};
`

const StRibbonTool = styled.button`
  display: flex;
  flex-direction: column;
  align-items: center;
  span { margin-top: 6px; }
`

const StGroupLabel = styled.div`
  display: flex;
  align-items: center;
  justify-content: center;
  gap: 6px;
`

const StSelectTools = styled.div`
  display: flex;
  gap: 4px;
  padding: 3px 19px 0 8px;
`

const StPickButton = styled.button`
  display: flex;
  flex-direction: column;
  align-items: flex-start;
  justify-content: space-between;
  width: 43px;
  height: 67px;
  padding: 2px 0 14px 3px;
  border-radius: 3px;
  background: #c1d9f2;
  span { align-self: center; margin-right: 3px; }
`

const StToolList = styled.div`
  display: flex;
  flex-direction: column;
  margin-top: -2px;
`

const StListTool = styled.button`
  display: flex;
  align-items: center;
  gap: 4px;
  height: 23px;
`

const StFilterBar = styled.section`
  display: flex;
  gap: 6px;
  padding: 1px 3px 2px;
  background: #f0f0f0;
`

const StSelectBox = styled.div`
  display: grid;
  align-items: center;
  width: 99px;
  height: 23px;
  border: 1px solid #dadada;
  border-radius: 3px;
  background: #fff;
  select {
    grid-area: 1 / 1;
    width: 100%;
    height: 21px;
    padding: 0 2px;
    border: 0;
    background: none;
    appearance: none;
  }
  ${StCaret} {
    grid-area: 1 / 1;
    justify-self: end;
    margin-right: 5px;
    pointer-events: none;
  }
`

const StMain = styled.main`
  display: flex;
  flex: 1;
  min-height: 0;
`

const StPanel = styled.section`
  display: flex;
  flex-direction: column;
  border: 1px solid #d9d9d9;
  border-top: 0;
`

const StStrip = styled.div`
  display: flex;
  align-items: center;
  justify-content: flex-end;
  flex: none;
  height: 12px;
  padding-right: 2px;
  border-top: 1px solid #d6d6d6;
  background: #e7e7e7;
`

const StPanelTitle = styled.h2`
  flex: none;
  height: 22px;
  margin: 0;
  padding: 2px 8px;
  border: solid #dadada;
  border-width: 1px 0;
  background: #f1f1f1;
  color: #808080;
  font-size: 12px;
  font-weight: 500;
`

const StToolbar = styled.div`
  display: flex;
  flex: none;
  align-items: center;
  gap: ${({ $gap }) => $gap || '7px'};
  height: 27px;
  padding: 0 2px 0 4px;
  border-bottom: 1px solid #dcdcdc;
  border-radius: 4px;
  overflow: hidden;
`

const StTextTool = styled.button`
  display: flex;
  flex: none;
  align-items: center;
  gap: 4px;
`

const StPlainTool = styled.button`
  flex: none;
`

const StMore = styled.button`
  display: flex;
  align-items: center;
  justify-content: center;
  width: 11px;
  height: ${({ $tall }) => ($tall ? '37px' : '22px')};
  margin-left: auto;
  border: 1px solid #e4e4e4;
  border-radius: 4px;
`

const StSearch = styled.input`
  flex: none;
  width: 100%;
  height: ${({ $tall }) => ($tall ? '25px' : '20px')};
  margin-bottom: ${({ $tall }) => ($tall ? '1px' : '0')};
  padding: 0 2px;
  border: solid #dcdcdc;
  border-width: 1px 0;
  outline: 0;
  &::placeholder { color: #8f8f8f; }
`

const StNavPanel = styled(StPanel)`
  flex: none;
  width: 241px;
`

const StNavBody = styled.div`
  display: flex;
  flex: 1;
  min-height: 0;
  padding-top: 4px;
  overflow: hidden;
  border-top: 1px solid #d9d9d9;
`

const StNavList = styled.nav`
  flex: 1;
`

const StNavHeading = styled.h3`
  height: 25px;
  margin: 0 0 3px;
  padding: 5px 3px;
  background: #ececec;
  font-size: 12px;
  font-weight: 400;
`

const StNavItem = styled.button`
  display: flex;
  align-items: center;
  gap: 14px;
  width: 100%;
  height: 25px;
  margin-bottom: 3px;
  padding-left: 17px;
  background: ${({ $active }) => ($active ? '#d3e7fe' : 'none')};
`

const StThumb = styled.div`
  flex: none;
  width: 8px;
  border-radius: 4px;
  background: #c9c9c9;
`

const StNavThumb = styled(StThumb)`
  margin: 12px 3px 16px 3px;
`

const StMidColumn = styled.div`
  display: flex;
  flex: none;
  flex-direction: column;
  gap: 4px;
  width: 352px;
  margin: 0 4px;
`

const StCompTree = styled.div`
  padding: 3px 0 29px;
  overflow: hidden;
`

const StCompRow = styled.div`
  display: flex;
  align-items: center;
  gap: 6px;
  height: 24px;
  padding-left: ${({ $indent }) => $indent}px;
  white-space: pre;
  ${StCaret} { margin-right: -4px; }
  ${({ $active }) => $active && css`
    span {
      flex: 1;
      margin-left: -3px;
      padding: 2px 3px 3px;
      border-radius: 3px;
      background: #bfd7f2;
    }
  `}
`

const StUsed = styled.em`
  color: #2f6fe8;
  font-style: normal;
`

const StPropPanel = styled(StPanel)`
  flex: 1;
  min-height: 0;
  overflow: hidden;
`

const StBlueHead = styled.th`
  background: #80b9fa;
  color: #fff;
  font-weight: 700;
`

const StPropTable = styled.table`
  flex: none;
  th, td {
    height: 21px;
    padding: 0 0 0 3px;
    border: solid #d9d9d9;
    border-width: 0 1px 1px 0;
    white-space: nowrap;
  }
  th { padding: 0; }
`

const StPropRow = styled.tr`
  ${({ $blue }) => $blue && css`td:nth-child(2) { color: #1557ff; }`}
  ${({ $active }) => $active && css`
    th { background: #80b9fa; color: #fff; font-weight: 700; }
    td:nth-child(3) { box-shadow: inset 0 0 0 1px #808080; }
  `}
`

const StExpand = styled.button`
  width: 13px;
  height: 13px;
  margin: 0 6px 2px 0;
  border: 1px solid #8a8a8a;
  border-radius: 3px;
  line-height: 10px;
  vertical-align: middle;
`

const StChildCell = styled.td`
  && { padding-left: 32px; }
`

const StSwatch = styled.div`
  width: 153px;
  height: 17px;
  margin-left: 5px;
  border: 1px solid #333;
  background: #f5c542;
`

const StWorkspace = styled.section`
  position: relative;
  flex: 1;
  min-width: 0;
  background: #000;
`

const StPlan = styled.svg`
  display: block;
  width: 100%;
  height: 100%;
`

const StViewBar = styled.div`
  position: absolute;
  top: 0;
  right: 0;
  display: flex;
  flex-direction: column;
  align-items: center;
  gap: 7px;
  width: 33px;
  padding: 12px 2px 12px 0;
  border-radius: 4px;
  background: #fff;
  ${StIconButton} { flex-direction: column; }
`

const StRule = styled.hr`
  width: 23px;
  margin: 0;
  border: 0;
  border-top: 1px solid #4d566b;
`

const StCollapse = styled.button`
  position: absolute;
  top: 50%;
  right: -4px;
  width: 4px;
  height: 99px;
  background: #606b7b;
`

const StRightColumn = styled.div`
  display: flex;
  flex: none;
  flex-direction: column;
  gap: 5px;
  width: 118px;
  margin-left: 4px;
  overflow: hidden;
`

const StSheetTable = styled.table`
  border-top: 1px solid #d9d9d9;
  th, td {
    height: 21px;
    padding: 0;
    border: solid #d9d9d9;
    border-width: 0 0 1px 1px;
  }
`

const StSheetRow = styled.tr`
  ${({ $active }) => $active && css`
    th { background: #80b9fa; color: #fff; font-weight: 700; }
    td { background: #d4e7fd; box-shadow: inset 0 1px #808080, inset 0 -1px #808080; }
  `}
`

const StSheetName = styled.div`
  display: flex;
  align-items: center;
  height: 20px;
  overflow: hidden;
  white-space: nowrap;
  ${StExpand} { flex: none; margin: 0 6px 0 2px; }
`

const StBranch = styled.i`
  flex: none;
  width: 16px;
  height: 20px;
  margin: 0 7px 0 8px;
  background:
    linear-gradient(#ddd, #ddd) 0 0 / 1px ${({ $last }) => ($last ? '50%' : '100%')} no-repeat,
    linear-gradient(#ddd, #ddd) 0 50% / 100% 1px no-repeat;
`

const StHScroll = styled.div`
  display: flex;
  align-items: center;
  gap: 5px;
  height: 19px;
  padding-left: 5px;
  &::before {
    content: '';
    border: 4px solid transparent;
    border-right: 5px solid #4d566b;
    border-left: 0;
  }
  &::after {
    content: '';
    flex: 1;
    height: 8px;
    border-radius: 4px 0 0 4px;
    background: #c9c9c9;
  }
`

const StCadPanel = styled(StPanel)`
  flex: 1;
`

const StLayerTable = styled.table`
  margin-top: 6px;
  border-top: 1px solid #d9d9d9;
  th, td {
    height: 26px;
    padding: 0;
    border: solid #d9d9d9;
    border-width: 0 1px 1px 0;
    overflow: hidden;
    text-align: center;
    white-space: nowrap;
  }
  th { height: 21px; }
  th:last-child, td:last-child { border-right: 0; }
  td:last-child { padding-left: 3px; text-align: left; }
`

const StCheck = styled.input`
  display: inline-grid;
  flex: none;
  place-content: center;
  width: 14px;
  height: 14px;
  margin: 0;
  border: 1px solid #777;
  border-radius: 2px;
  background: #fff;
  vertical-align: middle;
  appearance: none;
  &:checked {
    border-color: #2a7fe0;
    background: #2a7fe0;
  }
  &:checked::after {
    content: '';
    width: 5px;
    height: 9px;
    margin-bottom: 2px;
    border: solid #fff;
    border-width: 0 2px 2px 0;
    transform: rotate(42deg);
  }
`

const StPlay = styled.i`
  display: inline-block;
  border: 4px solid transparent;
  border-left: 8px solid #4d566b;
  border-right: 0;
`

const StWindow = styled.section`
  position: absolute;
  inset: 208px 279px 66px 477px;
  display: flex;
  flex-direction: column;
  border: 1px solid #bdbdbd;
  background: #e3e3e3;
  box-shadow: 0 2px 9px rgba(0, 0, 0, 0.4);
`

const StWindowHead = styled.header`
  display: flex;
  flex: none;
  align-items: center;
  justify-content: space-between;
  height: 28px;
  padding: 10px 10px 0 11px;
  background: linear-gradient(90deg, #fff 100px, #e3e3e3 130px);
  font-size: 14px;
`

const StWindowButtons = styled.div`
  display: flex;
  gap: 15px;
`

const StReportBar = styled.div`
  display: flex;
  flex: none;
  align-items: center;
  height: 45px;
  margin-right: 3px;
  border: 1px solid #bdbdbd;
  border-left: 0;
  border-radius: 4px;
  background: #fff;
`

const StReportGroup = styled.div`
  display: flex;
  align-items: center;
  height: 35px;
  padding: 0 3px 0 2px;
  & + & { border-left: 1px solid #d4d4d4; }
`

const StReportTool = styled.button`
  display: flex;
  flex-direction: column;
  align-items: center;
  gap: 3px;
  margin: ${({ $wide }) => ($wide ? '0 5px' : '0')};
  padding: 0 5px;
  &:disabled { color: #a6a6a6; cursor: default; }
`

const StReportBody = styled.div`
  display: grid;
  flex: 1;
  grid-template-columns: 228px 5px minmax(0, 1fr);
  min-height: 0;
  margin-right: 2px;
`

const StReportTree = styled.div`
  display: flex;
  justify-content: space-between;
  min-height: 0;
  overflow: hidden;
  margin-top: 1px;
  padding: 2px 3px 0 0;
  border: solid #cfcfcf;
  border-width: 1px 1px 1px 0;
  background: #fff;
`

const StReportRow = styled.button`
  display: flex;
  align-items: center;
  gap: ${({ $level }) => ($level === 2 ? 7 : 5)}px;
  height: 21px;
  margin: 1px 0 3px ${({ $level }) => ($level === 2 ? 61 : $level * 20)}px;
  padding-left: ${({ $level }) => ($level === 2 ? 4 : 11)}px;
  ${({ $level, $active }) => $level === 2 && css`
    min-width: 137px;
    background: ${$active ? '#c8dffa' : 'none'};
  `}
`

const StTreeThumb = styled(StThumb)`
  height: 243px;
  margin-top: 13px;
`

const StSplitter = styled.div`
  position: relative;
  background: #e3e3e3;
`

const StSplitButton = styled.button`
  position: absolute;
  top: calc(50% - 50px);
  right: -3px;
  width: 4px;
  height: 100px;
  border-radius: 2px;
  background: linear-gradient(#82c671 49px, #fff 49px, #fff 51px, #82c671 51px);
`

const StPageArea = styled.div`
  display: flex;
  flex-direction: column;
  min-height: 0;
  background: #fff;
`

const StPageRow = styled.div`
  display: flex;
  flex: 1;
  min-height: 0;
  padding-top: 10px;
`

const StPage = styled.div`
  flex: 1;
  min-width: 0;
  overflow: hidden;
  padding: 54px 0 0 56px;
  border: solid #000;
  border-width: 1px 0 0 1px;
  color: #000;
`

const StSheet = styled.div`
  width: 680px;
`

const StReportTitle = styled.h1`
  margin: 0;
  padding-right: 8px;
  font-family: SimSun, "Noto Serif CJK SC", "Noto Sans CJK SC", serif;
  font-size: 28px;
  font-weight: 600;
  line-height: 32px;
  text-align: center;
`

const StPageNo = styled.p`
  margin: 5px 0;
  padding-right: 8px;
  font-family: "Liberation Serif", "Noto Sans CJK SC", serif;
  font-size: 13px;
  font-weight: 700;
  text-align: right;
`

const StReportTable = styled.table`
  border: solid #000;
  border-width: 2px 1px 1px 2px;
  th { height: 18px; background: #e8e8e8; line-height: 14px; }
  td { height: 19px; }
  th, td { padding: 0; border: 1px solid #000; }
`

const StPageThumb = styled(StThumb)`
  height: 306px;
  margin: 4px 3px 0 3px;
`

const StPageHThumb = styled.div`
  flex: none;
  width: 627px;
  height: 8px;
  margin: 3px 0 2px 14px;
  border-radius: 4px;
  background: #c9c9c9;
`

const StStatus = styled.footer`
  display: flex;
  flex: none;
  align-items: center;
  gap: 14px;
  height: 22px;
  padding: 1px 0 0 17px;
  background: #fcfcfc;
`

const StStatusItem = styled.span`
  display: flex;
  gap: 9px;
  & + & { margin-right: 8px; }
`

const StGrip = styled.span`
  align-self: flex-end;
  margin: 0 2px 2px auto;
`

const StDialog = styled.section`
  position: absolute;
  top: 91px;
  left: 280px;
  display: flex;
  flex-direction: column;
  width: 387px;
  padding: 0 20px;
  border: 1px solid #bdbdbd;
  background: #fbfbfb;
  box-shadow: 0 3px 10px rgba(0, 0, 0, 0.35);
`

const StDialogHead = styled.header`
  display: flex;
  align-items: center;
  justify-content: space-between;
  height: 38px;
  margin: 0 -10px 11px -9px;
  font-size: 14px;
`

const StRangeBox = styled.div`
  height: 312px;
  border: 1px solid #c4c4c4;
  background: #fff;
`

const StRangeRow = styled.label`
  display: flex;
  align-items: center;
  gap: 7px;
  height: 24px;
  padding-left: ${({ $level }) => 12 + $level * 20}px;
  ${StCheck} { margin-left: -3px; }
`

const StCaretSpace = styled.i`
  width: 8px;
`

const StDialogFoot = styled.footer`
  display: flex;
  justify-content: flex-end;
  gap: 6px;
  margin: 0 -9px;
  padding: 14px 0 11px;
`

const StDialogButton = styled.button`
  width: 80px;
  height: 27px;
  border: 1px solid ${({ $primary }) => ($primary ? '#2a7fe0' : '#c4c4c4')};
  border-radius: 3px;
  background: ${({ $primary }) => ($primary ? '#2a7fe0' : '#fff')};
  color: ${({ $primary }) => ($primary ? '#fff' : '#333')};
`
